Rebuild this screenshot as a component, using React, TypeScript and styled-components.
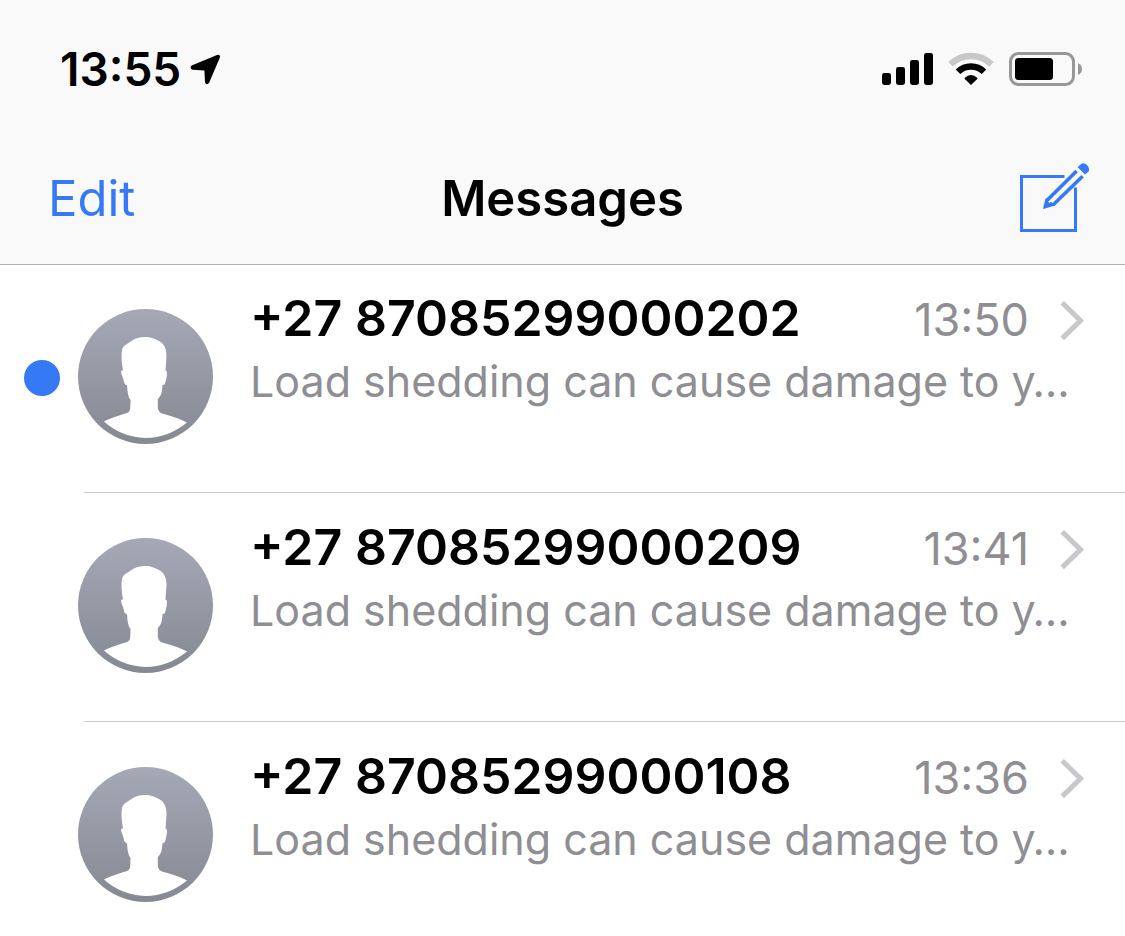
import React from "react";
import styled, { createGlobalStyle } from "styled-components";

const GlobalStyle = createGlobalStyle`
  *, *::before, *::after { box-sizing: border-box; }
  body {
    margin: 0;
    background: #ffffff;
    color: #000000;
    font-family: Inter, "Liberation Sans", sans-serif;
  }
  h1, h2, p, ul { margin: 0; padding: 0; }
`;

const Screen = styled.div`
  min-height: 100vh;
  overflow: hidden;
`;

const Header = styled.header`
  background: #f9f9f9;
  box-shadow: 0 1px 0 #b2b2b2;
`;

const StatusBar = styled.div`
  display: flex;
  align-items: center;
  justify-content: space-between;
  height: 132px;
  padding: 6px 42px 0 60px;
`;

const Clock = styled.div`
  display: flex;
  align-items: center;
  gap: 9px;
  font-size: 46px;
  line-height: 52px;
  font-weight: 600;
`;

const StatusIcons = styled.div`
  display: flex;
  align-items: center;
  gap: 15px;
`;

const NavBar = styled.nav`
  display: grid;
  grid-template-columns: 1fr auto 1fr;
  align-items: center;
  height: 132px;
  padding: 2px 34px 0;
`;

const NavButton = styled.button<{ $side: "left" | "right" }>`
  display: flex;
  justify-self: ${(p) => (p.$side === "left" ? "start" : "end")};
  padding: ${(p) => (p.$side === "left" ? "0 14px" : "0")};
  border: 0;
  background: none;
  color: #3579f6;
  font: inherit;
  font-size: 49px;
  line-height: 60px;
  cursor: pointer;
`;

const Title = styled.h1`
  font-size: 49px;
  line-height: 60px;
  font-weight: 600;
`;

const List = styled.ul`
  list-style: none;
`;

const Row = styled.li`
  &:not(:last-child)::after {
    content: "";
    display: block;
    height: 1px;
    margin-left: 84px;
    background: #c8c7cc;
  }
`;

const RowLink = styled.a`
  display: flex;
  align-items: flex-start;
  height: 228px;
  padding: 25px 41px 0 24px;
  color: inherit;
  text-decoration: none;
`;

const UnreadDot = styled.span<{ $visible: boolean }>`
  flex: none;
  width: 36px;
  height: 36px;
  margin: 71px 18px 0 0;
  border-radius: 50%;
  background: ${(p) => (p.$visible ? "#3579f6" : "transparent")};
`;

const AvatarSvg = styled.svg`
  flex: none;
  width: 135px;
  height: 135px;
  margin: 20px 37px 0 0;
`;

const Body = styled.div`
  flex: 1;
  min-width: 0;
`;

const TopLine = styled.div`
  display: flex;
  align-items: center;
  height: 62px;
`;

const Sender = styled.h2`
  flex: 1;
  align-self: flex-start;
  font-size: 50px;
  line-height: 58px;
  font-weight: 600;
  white-space: nowrap;
`;

const Time = styled.time`
  margin-right: 31px;
  color: #8e8e93;
  font-size: 45px;
  line-height: 60px;
`;

const Snippet = styled.p`
  color: #8e8e93;
  font-size: 43px;
  line-height: 60px;
  white-space: nowrap;
`;

const LocationIcon = () => (
  <svg width="31" height="31" viewBox="0 0 31 31" aria-hidden="true">
    <path d="M1.6 11.6 27 1Q30.8 .2 29.8 3.8L19 29Q16.6 31.6 15 28.4L14.4 16.4 2.6 15.8Q-.8 14.4 1.6 11.6Z" />
  </svg>
);

const SignalIcon = () => (
  <svg width="51" height="33" viewBox="0 0 51 33" aria-hidden="true">
    <rect x="0" y="20" width="9" height="12" rx="2.4" />
    <rect x="14" y="14" width="9" height="18" rx="2.4" />
    <rect x="28" y="7" width="9" height="25" rx="2.4" />
    <rect x="42" y="0" width="9" height="32" rx="2.4" />
  </svg>
);

const WifiIcon = () => (
  <svg width="46" height="34" viewBox="0 0 46 34" aria-hidden="true">
    <g fill="none" strokeWidth="6.5">
      <path d="M2.5 12.3A29.3 29.3 0 0 1 43.5 12.3" stroke="#c8c8c8" />
      <path d="M10 19.8A18.6 18.6 0 0 1 36 19.8" stroke="#000" />
    </g>
    <path d="M16.6 25.9Q23 20 29.4 25.9Q29.8 26.5 29.2 27.1L23 33 16.8 27.1Q16.2 26.5 16.6 25.9Z" />
  </svg>
);

const BatteryIcon = () => (
  <svg width="74" height="34" viewBox="0 0 74 34" aria-hidden="true">
    <rect x="1.5" y="1.5" width="63" height="31" rx="8" fill="none" stroke="#979797" strokeWidth="3" />
    <rect x="6" y="6" width="38" height="22" rx="3.5" />
    <path d="M69 11Q73 13 73 17T69 23Z" fill="#979797" />
  </svg>
);

const ComposeIcon = () => (
  <svg width="71" height="72" viewBox="0 0 71 72" fill="none" stroke="#3579f6" aria-hidden="true">
    <path d="M44.5 13.5H1.5V67.5H55.5V24.5" strokeWidth="3" />
    <path d="M56.6 8 27.2 37.2M62.6 13.2 33 42" strokeWidth="3.6" />
    <path d="M25.4 35.4 23 46 34.4 42.8 31 38.6 29.6 40 28 38.4 29.6 36.6Z" fill="#3579f6" stroke="none" />
    <path d="M57.6 4.2 61 1Q64-1 67 2T68.6 8.4L65 11.6Z" fill="#3579f6" stroke="none" />
  </svg>
);

const Avatar = ({ id }: { id: string }) => (
  <AvatarSvg viewBox="0 0 135 135" aria-hidden="true">
    <defs>
      <linearGradient id={id} x1="0" y1="0" x2="0" y2="1">
        <stop offset="0" stopColor="#a5a9b6" />
        <stop offset="1" stopColor="#858992" />
      </linearGradient>
    </defs>
    <circle cx="67.5" cy="67.5" r="67.5" fill={`url(#${id})`} />
    <path
      fill="#fff"
      d="M67 28C73 28 77 30 81 32C87 35 88.5 41 88.5 47L87.5 61.5C89.5 61.5 89.3 66 88 71C87 75 87 76 84.5 76C84 82 84 86 79.8 90V98Q80 103 84 104.5C94 107 101 109.500 109 113.5Q90 129 67.5 129Q43 128 26 112.5C34 108.5 43 106 49 104Q52 103 52.2 99L52.6 91C49.5 87 49.5 81 49 76C46.5 76 46.3 74 45 69C42.5 63 42.5 61.5 45 61.5C43.5 53 43 46 44 41C45.5 36 48 36 52 33C57 29 62 28 67 28Z"
    />
  </AvatarSvg>
);

const ChevronIcon = () => (
  <svg width="24" height="42" viewBox="0 0 24 42" fill="none" aria-hidden="true">
    <path d="M2.2 3.8 20.5 21.6 2.2 39.4" stroke="#c7c7cc" strokeWidth="5" />
  </svg>
);

const conversations = [
  { sender: "+27 87085299000202", time: "13:50", unread: true },
  { sender: "+27 87085299000209", time: "13:41", unread: false },
  { sender: "+27 87085299000108", time: "13:36", unread: false },
];

export default function App() {
  return (
    <Screen>
      <GlobalStyle />
      <Header>
        <StatusBar>
          <Clock>
            <span>13:55</span>
            <LocationIcon />
          </Clock>
          <StatusIcons>
            <SignalIcon />
            <WifiIcon />
            <BatteryIcon />
          </StatusIcons>
        </StatusBar>
        <NavBar>
          <NavButton type="button" $side="left">Edit</NavButton>
          <Title>Messages</Title>
          <NavButton type="button" $side="right" aria-label="Compose">
            <ComposeIcon />
          </NavButton>
        </NavBar>
      </Header>
      <List>
        {conversations.map((c, i) => (
          <Row key={c.sender}>
            <RowLink href="#">
              <UnreadDot $visible={c.unread} />
              <Avatar id={`avatar-${i}`} />
              <Body>
                <TopLine>
                  <Sender>{c.sender}</Sender>
                  <Time>{c.time}</Time>
                  <ChevronIcon />
                </TopLine>
                <Snippet>Load shedding can cause damage to y…</Snippet>
              </Body>
            </RowLink>
          </Row>
        ))}
      </List>
    </Screen>
  );
}
